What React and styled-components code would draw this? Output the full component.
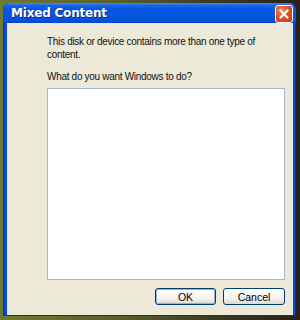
import React from "react";
import styled, { createGlobalStyle } from "styled-components";

const GlobalStyle = createGlobalStyle`
  html, body {
    margin: 0;
    padding: 0;
  }
  body {
    width: 300px;
    height: 320px;
    overflow: hidden;
  }
`;

const Desktop = styled.div`
  width: 300px;
  height: 320px;
  box-sizing: border-box;
  padding: 3px 4px 4px 3px;
  background: linear-gradient(90deg, #6f7a32 0%, #57602a 40%, #3a3424 75%, #2a2118 100%);
  display: flex;
`;

const Window = styled.div`
  flex: 1;
  min-width: 0;
  display: flex;
  flex-direction: column;
  background: #0b47d6;
  border-radius: 7px 7px 0 0;
  padding: 0 3px 3px 4px;
  box-shadow: inset 0 0 0 1px #0a2ea8;
`;

const TitleBar = styled.div`
  height: 22px;
  margin: 0 -3px 0 -4px;
  padding: 0 3px 0 8px;
  border-radius: 7px 7px 0 0;
  background: linear-gradient(
    180deg,
    #3d8cf8 0%,
    #1a63ea 12%,
    #0757e3 30%,
    #0555e0 70%,
    #0a4fd3 90%,
    #0b44c2 100%
  );
  display: flex;
  align-items: center;
  justify-content: space-between;
`;

const Title = styled.span`
  font-family: "DejaVu Sans", "Liberation Sans", sans-serif;
  font-weight: bold;
  font-size: 12px;
  letter-spacing: -0.2px;
  color: #fff;
  text-shadow: 1px 1px 0 #0a2a80;
`;

const CloseButton = styled.button`
  width: 18px;
  height: 18px;
  margin-top: 2px;
  padding: 0;
  border: 1px solid #fff;
  border-radius: 3px;
  background: radial-gradient(circle at 35% 30%, #f08a5c 0%, #e0522a 45%, #c13612 100%);
  display: flex;
  align-items: center;
  justify-content: center;
`;

const Body = styled.div`
  flex: 1;
  min-width: 0;
  background: #ece9d8;
  display: flex;
  flex-direction: column;
  padding: 12px 8px 10px 40px;
  font-family: "Liberation Sans", Arial, sans-serif;
  font-size: 10px;
  letter-spacing: -0.3px;
  color: #111;
`;

const Message = styled.p`
  margin: 0;
  line-height: 13px;
  white-space: nowrap;
`;

const Prompt = styled.p`
  margin: 9px 0 5px;
  line-height: 13px;
`;

const ListBox = styled.div`
  height: 190px;
  background: #fff;
  border: 1px solid #a9b8c8;
`;

const ButtonRow = styled.div`
  display: flex;
  justify-content: flex-end;
  gap: 7px;
  margin-top: 8px;
`;

const Button = styled.button`
  width: ${(p) => p.$w}px;
  height: 17px;
  padding: 0;
  border: 1px solid #003c74;
  border-radius: 3px;
  background: linear-gradient(180deg, #ffffff 0%, #f4f3ee 60%, #dcdad0 100%);
  box-shadow: ${(p) => (p.$default ? "inset 0 0 0 1px #8db2e8" : "none")};
  font-family: "Liberation Sans", Arial, sans-serif;
  font-size: 10.5px;
  color: #000;
`;

export default function App() {
  return (
    <>
      <GlobalStyle />
      <Desktop>
        <Window>
          <TitleBar>
            <Title>Mixed Content</Title>
            <CloseButton aria-label="Close">
              <svg width="10" height="10" viewBox="0 0 10 10">
                <path d="M1.5 1.5 L8.5 8.5 M8.5 1.5 L1.5 8.5" stroke="#fff" strokeWidth="2" strokeLinecap="square" />
              </svg>
            </CloseButton>
          </TitleBar>
          <Body>
            <Message>
              This disk or device contains more than one type of
              <br />
              content.
            </Message>
            <Prompt>What do you want Windows to do?</Prompt>
            <ListBox />
            <ButtonRow>
              <Button $w={61} $default>OK</Button>
              <Button $w={62}>Cancel</Button>
            </ButtonRow>
          </Body>
        </Window>
      </Desktop>
    </>
  );
}
